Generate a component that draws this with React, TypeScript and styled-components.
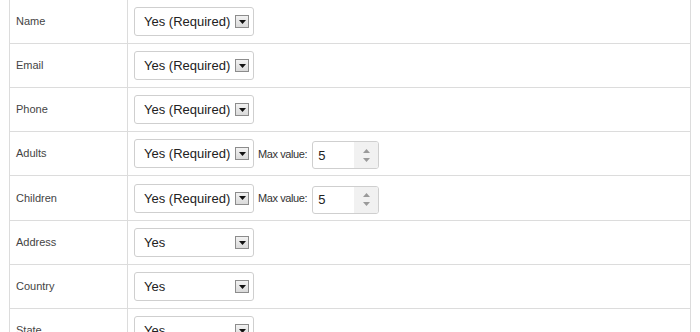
import styled, { createGlobalStyle } from 'styled-components'

const GlobalStyle = createGlobalStyle`
  html, body {
    margin: 0;
    padding: 0;
    background: #fff;
    font-family: "Liberation Sans", Arial, sans-serif;
    overflow: hidden;
  }
`

type Field = {
  label: string
  value: string
  max?: number
  tall?: boolean
}

const fields: Field[] = [
  { label: 'Name', value: 'Yes (Required)' },
  { label: 'Email', value: 'Yes (Required)' },
  { label: 'Phone', value: 'Yes (Required)' },
  { label: 'Adults', value: 'Yes (Required)', max: 5 },
  { label: 'Children', value: 'Yes (Required)', max: 5, tall: true },
  { label: 'Address', value: 'Yes' },
  { label: 'Country', value: 'Yes' },
  { label: 'State', value: 'Yes' },
]

function App() {
  return (
    <>
      <GlobalStyle />
      <Table>
        {fields.map((f) => (
          <Row key={f.label} $tall={f.tall}>
            <LabelCell>{f.label}</LabelCell>
            <ValueCell>
              <Select>
                <SelectText>{f.value}</SelectText>
                <DropBtn>
                  <svg width="7" height="4" viewBox="0 0 7 4">
                    <path d="M0 0h7L3.5 4z" fill="#111" />
                  </svg>
                </DropBtn>
              </Select>
              {f.max !== undefined && (
                <>
                  <MaxLabel>Max value:</MaxLabel>
                  <NumberBox>
                    <NumberText>{f.max}</NumberText>
                    <Spinner>
                      <svg width="7" height="4" viewBox="0 0 7 4">
                        <path d="M0 4h7L3.5 0z" fill="#9a9a9a" />
                      </svg>
                      <svg width="7" height="4" viewBox="0 0 7 4">
                        <path d="M0 0h7L3.5 4z" fill="#9a9a9a" />
                      </svg>
                    </Spinner>
                  </NumberBox>
                </>
              )}
            </ValueCell>
          </Row>
        ))}
      </Table>
    </>
  )
}

const Table = styled.div`
  margin-left: 9px;
  width: 682px;
  box-sizing: border-box;
  border-left: 1px solid #dcdcdc;
  border-right: 1px solid #dcdcdc;
`
const Row = styled.div<{ $tall?: boolean }>`
  display: grid;
  grid-template-columns: 118px 1fr;
  height: ${(p) => (p.$tall ? '45px' : '44px')};
  box-sizing: border-box;
  border-bottom: 1px solid #dcdcdc;
`
const LabelCell = styled.div`
  display: flex;
  align-items: center;
  padding-left: 6px;
  padding-bottom: 1px;
  border-right: 1px solid #dcdcdc;
  font-size: 11px;
  color: #444;
`
const ValueCell = styled.div`
  display: flex;
  align-items: center;
  padding-left: 6px;
  gap: 4px;
`
const Select = styled.div`
  width: 120px;
  height: 29px;
  box-sizing: border-box;
  border: 1px solid #cfcfcf;
  border-radius: 3px;
  background: #fff;
  display: flex;
  align-items: center;
  justify-content: space-between;
  padding: 0 4px 0 9px;
`
const SelectText = styled.span`
  font-size: 13px;
  color: #222;
`
const DropBtn = styled.span`
  width: 14px;
  height: 13px;
  box-sizing: border-box;
  border: 1px solid #8c8c8c;
  background: linear-gradient(#f2f2f2, #dadada);
  display: flex;
  align-items: center;
  justify-content: center;
`
const MaxLabel = styled.span`
  font-size: 11px;
  letter-spacing: -0.4px;
  color: #333;
  margin-right: 1px;
`
const NumberBox = styled.div`
  width: 67px;
  height: 28px;
  margin-top: 3px;
  box-sizing: border-box;
  border: 1px solid #cfcfcf;
  border-radius: 3px;
  display: flex;
  overflow: hidden;
`
const NumberText = styled.span`
  flex: 1;
  display: flex;
  align-items: center;
  padding-left: 5px;
  font-size: 13px;
  color: #222;
`
const Spinner = styled.div`
  width: 24px;
  background: #f1f1f1;
  display: flex;
  flex-direction: column;
  align-items: center;
  justify-content: space-around;
  padding: 4px 0;
  box-sizing: border-box;
`

export default App
